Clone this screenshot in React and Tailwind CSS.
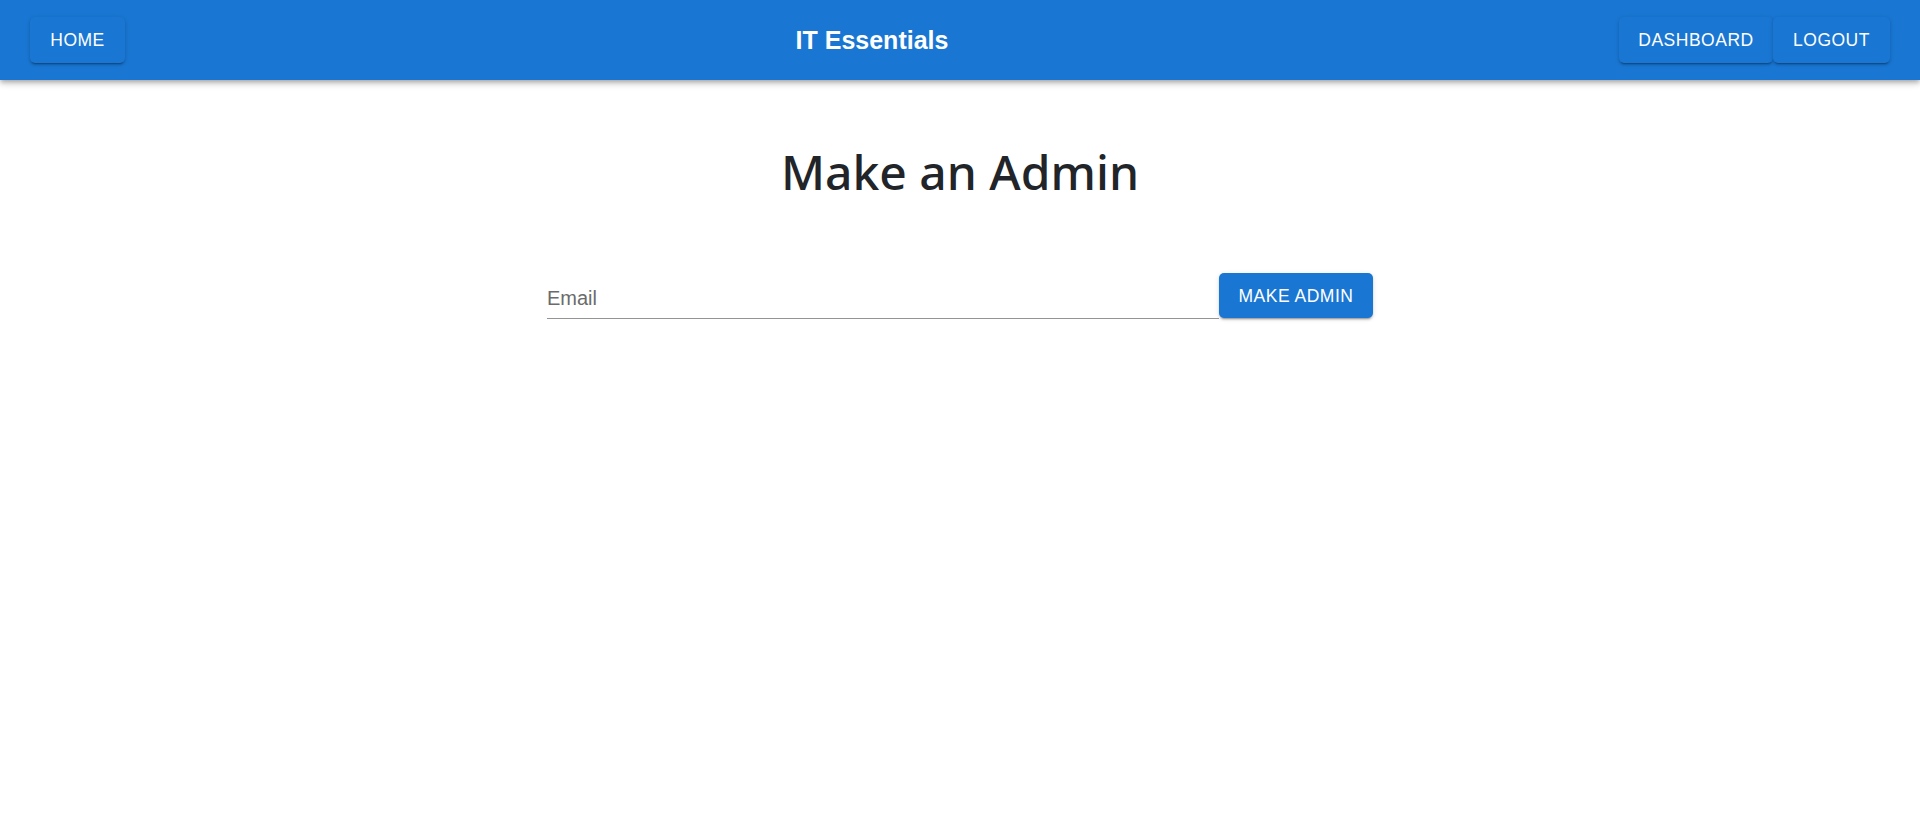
const navBtn =
  "flex h-[46px] items-center justify-center rounded-[5px] bg-[#1976d2] px-5 pt-[2px] text-[17.5px] uppercase leading-none tracking-[0.5px] text-white shadow-[0_3px_1px_-2px_rgba(0,0,0,0.2),0_2px_2px_0_rgba(0,0,0,0.14),0_1px_5px_0_rgba(0,0,0,0.12)]";

function Header() {
  return (
    <header className="flex h-20 items-center justify-between bg-[#1976d2] px-[30px] shadow-[0_2px_4px_-1px_rgba(0,0,0,0.2),0_4px_5px_0_rgba(0,0,0,0.14),0_1px_10px_0_rgba(0,0,0,0.12)]">
      <button type="button" className={`${navBtn} w-[95px]`}>
        Home
      </button>
      <div className="text-[25px] font-bold leading-none text-white">IT Essentials</div>
      <div className="flex">
        <button type="button" className={`${navBtn} w-[154px]`}>
          Dashboard
        </button>
        <button type="button" className={`${navBtn} w-[117px]`}>
          Logout
        </button>
      </div>
    </header>
  );
}

export default function App() {
  return (
    <div className="min-h-[827px] bg-white font-['Liberation_Sans',Arial,sans-serif]">
      <Header />
      <main className="flex flex-col items-center">
        <h1 className="mt-[62px] font-['Noto_Sans',sans-serif] text-[48px] font-medium leading-[60px] text-[#212529]">
          Make an Admin
        </h1>
        <form className="mt-[71px] flex items-start" onSubmit={(e) => e.preventDefault()}>
          <div className="relative h-[46px] w-[672px] border-b border-[#949494]">
            <input
              className="absolute inset-x-0 bottom-[3px] h-[34px] bg-transparent text-[20px] text-[#212121] outline-none placeholder:text-[#6b6b6b]"
              placeholder="Email"
              type="email"
            />
          </div>
          <button
            type="submit"
            className="flex h-[45px] w-[154px] items-center justify-center rounded-[5px] bg-[#1976d2] pt-[2px] text-[17.5px] uppercase leading-none tracking-[0.5px] text-white shadow-[0_3px_1px_-2px_rgba(0,0,0,0.2),0_2px_2px_0_rgba(0,0,0,0.14),0_1px_5px_0_rgba(0,0,0,0.12)]"
          >
            Make Admin
          </button>
        </form>
      </main>
    </div>
  );
}
